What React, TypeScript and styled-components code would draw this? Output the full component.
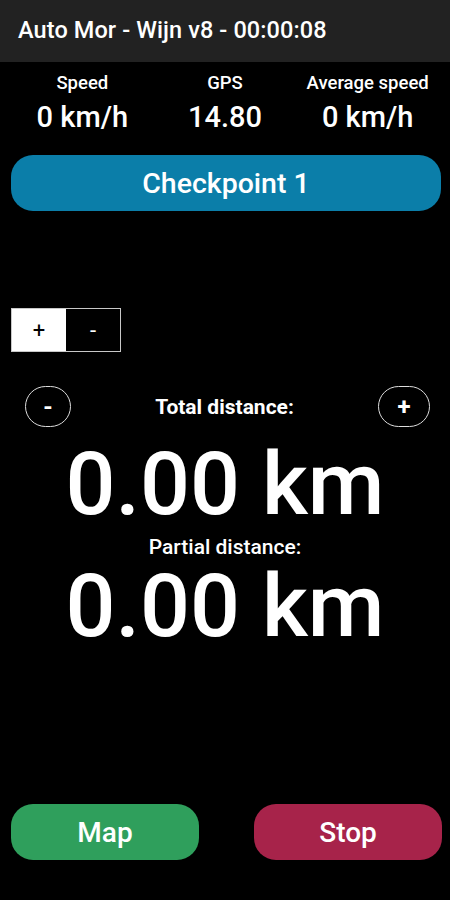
import * as React from 'react';
import styled, { createGlobalStyle } from 'styled-components';

const GlobalStyle = createGlobalStyle`
  html, body {
    margin: 0;
    padding: 0;
    background: #000;
  }
  body {
    font-family: Roboto, "Noto Sans", "Liberation Sans", sans-serif;
    color: #fff;
  }
`;

const Screen = styled.div`
  width: 450px;
  height: 900px;
  display: flex;
  flex-direction: column;
  background: #000;
  overflow: hidden;
`;

const TitleBar = styled.div`
  height: 62px;
  display: flex;
  align-items: center;
  padding: 0 18px 2px;
  box-sizing: border-box;
  background: #222;
  font-size: 23.5px;
  font-weight: 500;
  letter-spacing: 0.1px;
`;

const Stats = styled.div`
  display: grid;
  grid-template-columns: repeat(3, 1fr);
  padding: 9px 11px 0;
`;

const Stat = styled.div`
  display: flex;
  flex-direction: column;
  align-items: center;
`;

const StatLabel = styled.div`
  font-size: 18.5px;
  font-weight: 500;
  line-height: 24px;
`;

const StatValue = styled.div`
  font-size: 29px;
  font-weight: 500;
  line-height: 40px;
  margin-top: 2px;
`;

const Pill = styled.button<{ $bg: string }>`
  border: none;
  border-radius: 22px;
  height: 56px;
  background: ${({ $bg }) => $bg};
  color: #fff;
  font-family: inherit;
  font-size: 28px;
  font-weight: 500;
  padding: 0;
`;

const CheckpointButton = styled(Pill)`
  margin: 18px 9px 0 11px;
  font-size: 28.5px;
`;

const Toggle = styled.div`
  display: flex;
  width: 108px;
  height: 42px;
  margin: 97px 0 0 11px;
  border: 1px solid #c8c8c8;
`;

const ToggleHalf = styled.div<{ $active?: boolean }>`
  flex: 1;
  display: flex;
  align-items: center;
  justify-content: center;
  background: ${({ $active }) => ($active ? '#fff' : '#000')};
  color: ${({ $active }) => ($active ? '#000' : '#fff')};
  font-size: 22px;
  font-weight: 400;
`;

const DistanceHeader = styled.div`
  display: flex;
  align-items: center;
  justify-content: space-between;
  margin: 34px 20px 0 25px;
`;

const RoundButton = styled.div<{ $w: number }>`
  width: ${({ $w }) => $w}px;
  height: 41px;
  box-sizing: border-box;
  border: 1.5px solid #ddd;
  border-radius: 21px;
  display: flex;
  align-items: center;
  justify-content: center;
  font-size: 24px;
  font-weight: 700;
`;

const DistanceLabel = styled.div`
  font-size: 21px;
  font-weight: 700;
`;

const SubLabel = styled.div`
  text-align: center;
  font-size: 21px;
  font-weight: 500;
  line-height: 24px;
  margin-top: 7px;
`;

const BigValue = styled.div<{ $gap: number }>`
  text-align: center;
  font-size: 88px;
  font-weight: 500;
  line-height: 88px;
  margin-top: ${({ $gap }) => $gap}px;
`;

const BottomBar = styled.div`
  margin-top: auto;
  display: flex;
  justify-content: space-between;
  padding: 0 8px 40px 11px;
`;

const WideButton = styled(Pill)`
  width: 188px;
`;

const App: React.FC = () => (
  <>
    <GlobalStyle />
    <Screen>
      <TitleBar>Auto Mor - Wijn v8 - 00:00:08</TitleBar>
      <Stats>
        <Stat>
          <StatLabel>Speed</StatLabel>
          <StatValue>0 km/h</StatValue>
        </Stat>
        <Stat>
          <StatLabel>GPS</StatLabel>
          <StatValue>14.80</StatValue>
        </Stat>
        <Stat>
          <StatLabel>Average speed</StatLabel>
          <StatValue>0 km/h</StatValue>
        </Stat>
      </Stats>
      <CheckpointButton $bg="#0b7ea9">Checkpoint 1</CheckpointButton>
      <Toggle>
        <ToggleHalf $active>+</ToggleHalf>
        <ToggleHalf>-</ToggleHalf>
      </Toggle>
      <DistanceHeader>
        <RoundButton $w={46}>-</RoundButton>
        <DistanceLabel>Total distance:</DistanceLabel>
        <RoundButton $w={52}>+</RoundButton>
      </DistanceHeader>
      <BigValue $gap={13}>0.00 km</BigValue>
      <SubLabel>Partial distance:</SubLabel>
      <BigValue $gap={3}>0.00 km</BigValue>
      <BottomBar>
        <WideButton $bg="#2f9f5c">Map</WideButton>
        <WideButton $bg="#a7234a">Stop</WideButton>
      </BottomBar>
    </Screen>
  </>
);

export default App;
